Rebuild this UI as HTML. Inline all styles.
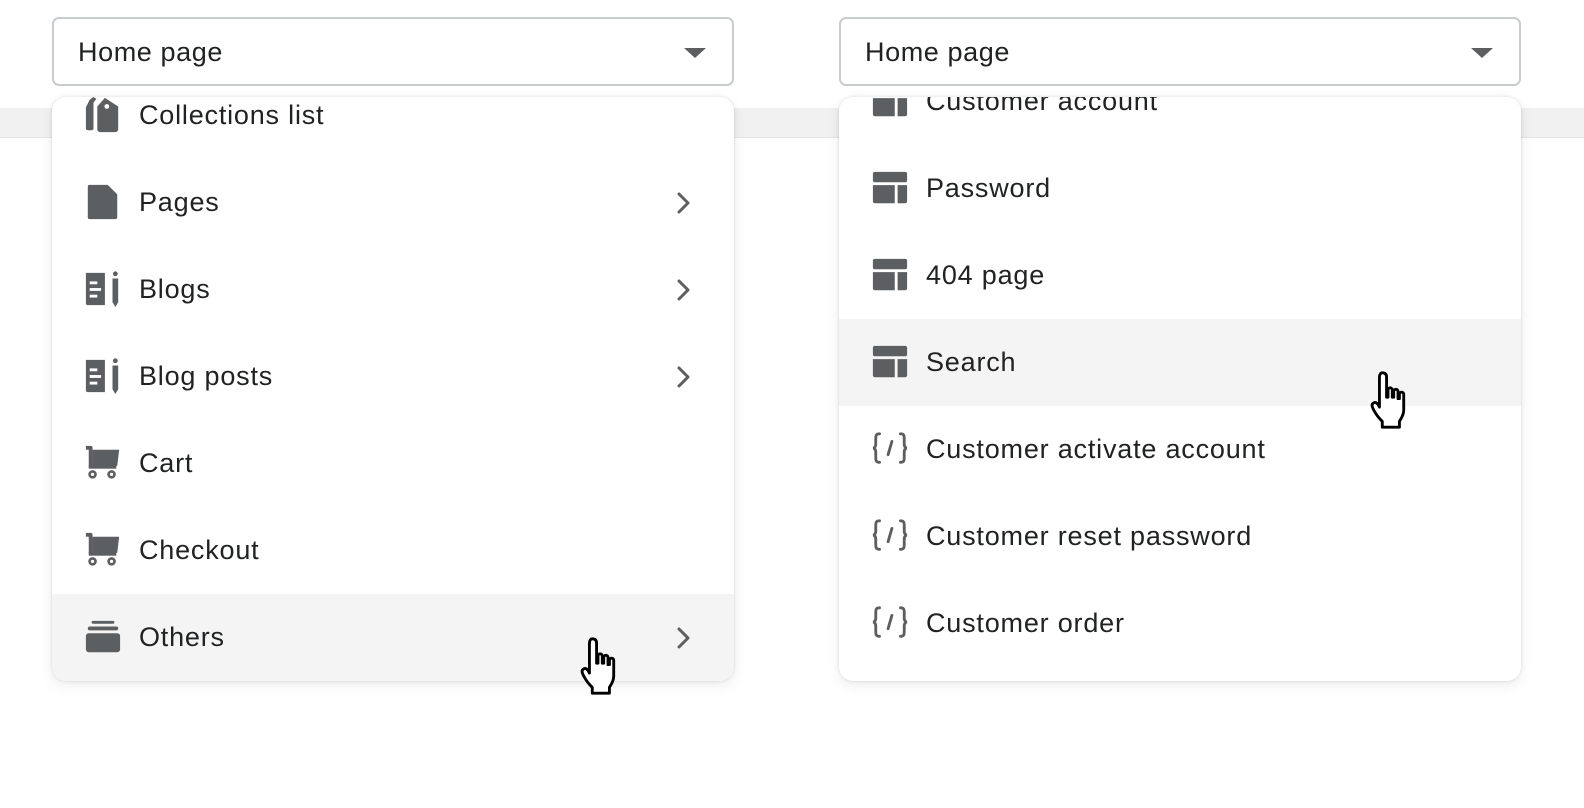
<!DOCTYPE html>
<html><head><meta charset="utf-8"><style>
*{margin:0;padding:0;box-sizing:border-box}
body{width:1584px;height:808px;background:#fff;position:relative;overflow:hidden;font-family:"Liberation Sans",Helvetica,Arial,sans-serif;color:#202223}
.strip{position:absolute;left:0;right:0;top:108px;height:30px;background:#f1f1f1;border-bottom:1px solid #e6e6e6}
.sel{position:absolute;top:17px;width:682px;height:69px;border:2px solid #c9cccf;border-radius:7px;background:#fff;font-size:27px;letter-spacing:0.6px;line-height:66px;padding-left:24px}
.sel:after{content:"";position:absolute;right:26px;top:29px;border-left:11px solid transparent;border-right:11px solid transparent;border-top:10px solid #5c5f62}
.panel{position:absolute;top:97px;width:682px;height:584px;background:#fff;border-radius:14px;box-shadow:0 0 3px rgba(0,0,0,.12),0 4px 14px rgba(0,0,0,.08);overflow:hidden}
.row{position:absolute;left:0;right:0;height:87px}
.row.hl{background:#f4f4f4}
.row span{position:absolute;left:87px;top:0;line-height:87px;font-size:27px;letter-spacing:0.8px}
.row svg.ic{position:absolute;left:32px;top:24px;width:38px;height:38px}
.chev{position:absolute;right:40px;top:32px;width:20px;height:24px}
</style></head><body>
<div class="strip"></div>
<div class="sel" style="left:52px">Home page</div>
<div class="sel" style="left:839px">Home page</div>

<svg width="0" height="0" style="position:absolute">
<defs>
<g id="chev"><path d="M5 3l9 9-9 9" fill="none" stroke="#5c5f62" stroke-width="3" stroke-linecap="round" stroke-linejoin="round"/></g>
<g id="cart" fill="#5c5f62"><path d="M9 6h28l-2 17H9z"/><path d="M2 2h5a2 2 0 0 1 2 2V24h-4V6H2z"/><rect x="5" y="22" width="29" height="4"/><circle cx="9" cy="32" r="4.5"/><circle cx="29" cy="32" r="4.5"/><circle cx="9" cy="32" r="1.7" fill="#fff"/><circle cx="29" cy="32" r="1.7" fill="#fff"/></g>
<g id="blog" fill="#5c5f62"><path d="M2 3h20v34H4a2 2 0 0 1-2-2z"/><rect x="6" y="12" width="8" height="3" fill="#fff"/><rect x="6" y="19" width="12" height="3" fill="#fff"/><rect x="6" y="26" width="8" height="3" fill="#fff"/><circle cx="33" cy="4" r="2.5"/><path d="M30 9h6v25l-3 5-3-5z"/></g>
<g id="tmpl" fill="#5c5f62"><rect x="2" y="3" width="36" height="11" rx="2"/><path d="M2 17h23v19H4a2 2 0 0 1-2-2z"/><path d="M28 17h10v17a2 2 0 0 1-2 2h-8z"/></g>
<g id="code" fill="none" stroke="#5c5f62" stroke-width="3" stroke-linecap="round"><path d="M9 4c-4 0-4 2-4 6v5c0 3-2 4-3 4 1 0 3 1 3 4v5c0 4 0 6 4 6"/><path d="M31 4c4 0 4 2 4 6v5c0 3 2 4 3 4-1 0-3 1-3 4v5c0 4 0 6-4 6"/><path d="M22 12l-4 14"/></g>
<g id="hand"><path d="M12 2c2 0 3 1 3 3v14h1v-5c0-2 3-2 3 0v5h1v-4c0-2 3-2 3 0v5h1v-3c0-2 3-2 3 0v11c0 4-2 6-3 8v4H12v-4c-2-2-4-4-6-8-1-2-2-4 0-5 2-1 3 1 4 3V5c0-2 1-3 2-3z" fill="#fff" stroke="#000" stroke-width="2" stroke-linejoin="round"/></g>
</defs></svg>

<div class="panel" style="left:52px">
  <div class="row" style="top:-25px"><svg class="ic" viewBox="0 0 40 40"><path d="M6 4l4-3 3 2-3 4v27a2 2 0 0 1-2 2H4a2 2 0 0 1-2-2V12z" fill="#5c5f62"/><path d="M22 2l-8 9v24a3 3 0 0 0 3 3h16a3 3 0 0 0 3-3V11z" fill="#5c5f62"/><circle cx="24" cy="11" r="2.5" fill="#fff"/></svg><span>Collections list</span></div>
  <div class="row" style="top:62px"><svg class="ic" viewBox="0 0 40 40"><path d="M5 2h20l10 10v24a2 2 0 0 1-2 2H6a2 2 0 0 1-2-2V4a2 2 0 0 1 1-2z" fill="#5c5f62"/></svg><span>Pages</span><svg class="chev" viewBox="0 0 20 24"><use href="#chev"/></svg></div>
  <div class="row" style="top:149px"><svg class="ic" viewBox="0 0 40 40"><use href="#blog"/></svg><span>Blogs</span><svg class="chev" viewBox="0 0 20 24"><use href="#chev"/></svg></div>
  <div class="row" style="top:236px"><svg class="ic" viewBox="0 0 40 40"><use href="#blog"/></svg><span>Blog posts</span><svg class="chev" viewBox="0 0 20 24"><use href="#chev"/></svg></div>
  <div class="row" style="top:323px"><svg class="ic" viewBox="0 0 40 40"><use href="#cart"/></svg><span>Cart</span></div>
  <div class="row" style="top:410px"><svg class="ic" viewBox="0 0 40 40"><use href="#cart"/></svg><span>Checkout</span></div>
  <div class="row hl" style="top:497px"><svg class="ic" viewBox="0 0 40 40" fill="#5c5f62"><rect x="8" y="3" width="24" height="3" rx="1.5"/><rect x="4" y="9" width="32" height="4" rx="2"/><rect x="2" y="16" width="36" height="20" rx="3"/></svg><span>Others</span><svg class="chev" viewBox="0 0 20 24"><use href="#chev"/></svg></div>
</div>

<div class="panel" style="left:839px">
  <div class="row" style="top:-39px"><svg class="ic" viewBox="0 0 40 40"><use href="#tmpl"/></svg><span>Customer account</span></div>
  <div class="row" style="top:48px"><svg class="ic" viewBox="0 0 40 40"><use href="#tmpl"/></svg><span>Password</span></div>
  <div class="row" style="top:135px"><svg class="ic" viewBox="0 0 40 40"><use href="#tmpl"/></svg><span>404 page</span></div>
  <div class="row hl" style="top:222px"><svg class="ic" viewBox="0 0 40 40"><use href="#tmpl"/></svg><span>Search</span></div>
  <div class="row" style="top:309px"><svg class="ic" viewBox="0 0 40 40"><use href="#code"/></svg><span>Customer activate account</span></div>
  <div class="row" style="top:396px"><svg class="ic" viewBox="0 0 40 40"><use href="#code"/></svg><span>Customer reset password</span></div>
  <div class="row" style="top:483px"><svg class="ic" viewBox="0 0 40 40"><use href="#code"/></svg><span>Customer order</span></div>
</div>

<svg style="position:absolute;left:574px;top:636px" width="48" height="60" viewBox="0 0 32 42"><use href="#hand"/></svg>
<svg style="position:absolute;left:1364px;top:370px" width="48" height="60" viewBox="0 0 32 42"><use href="#hand"/></svg>
</body></html>
